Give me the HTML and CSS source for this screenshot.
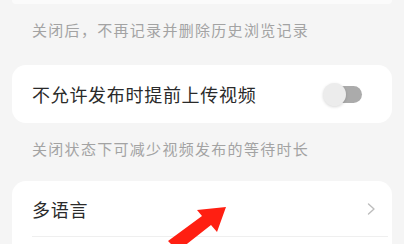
FILE: index.html
```html
<!DOCTYPE html>
<html lang="zh-CN">
<head>
<meta charset="utf-8">
<link rel="stylesheet" href="styles.css">
</head>
<body>
<div class="page">
  <div class="card card-top"></div>
  <p class="caption caption-first">关闭后，不再记录并删除历史浏览记录</p>
  <div class="card">
    <div class="row">
      <span class="label">不允许发布时提前上传视频</span>
      <span class="switch"><span class="knob"></span></span>
    </div>
  </div>
  <p class="caption">关闭状态下可减少视频发布的等待时长</p>
  <div class="card">
    <div class="row row-link">
      <span class="label">多语言</span>
      <svg class="chevron" width="9" height="12" viewBox="0 0 9 12"><path d="M1.5 1 L7 6 L1.5 11" fill="none" stroke="#bdbdbd" stroke-width="1.4" stroke-linecap="round" stroke-linejoin="round"/></svg>
    </div>
    <div class="divider"></div>
    <div class="row"></div>
  </div>
  <svg class="arrow" width="70" height="50" viewBox="0 0 70 50"><polygon points="62,12 53,37 47,30 14,56 4,46 38,21 33,15" fill="#ff1f12"/></svg>
</div>
</body>
</html>
```
FILE: styles.css
```css
html, body {
  margin: 0;
  padding: 0;
  background: #f5f5f5;
}
.page {
  position: relative;
  width: 404px;
  height: 244px;
  overflow: hidden;
  font-family: "Noto Sans CJK SC", "Noto Sans", sans-serif;
}
.card {
  margin: 0 12px;
  background: #ffffff;
  border-radius: 14px;
}
.card-top {
  height: 4px;
  border-radius: 0 0 14px 14px;
  background: #fbfbfb;
}
.caption {
  margin: 0;
  padding: 16px 0 0 32px;
  height: 42px;
  font-size: 15px;
  line-height: 20px;
  letter-spacing: 1.3px;
  color: #a3a3a3;
}
.caption-first {
  height: 45px;
}
.row {
  height: 58px;
  display: flex;
  align-items: center;
  justify-content: space-between;
  padding: 0 28px 0 20px;
}
.row-link {
  height: 55px;
  padding-right: 16px;
}
.label {
  font-size: 18px;
  letter-spacing: 0.7px;
  color: #2a2a2a;
}
.switch {
  position: relative;
  width: 36px;
  height: 17px;
  border-radius: 9px;
  background: #ababab;
  margin-right: 2px;
}
.knob {
  position: absolute;
  left: -3px;
  top: -3px;
  width: 23px;
  height: 23px;
  border-radius: 50%;
  background: #ececec;
  box-shadow: 0 1px 3px rgba(0,0,0,0.15);
}
.chevron {
  display: block;
}
.divider {
  height: 1px;
  margin: 0 4px 0 20px;
  background: #efefef;
}
.arrow {
  position: absolute;
  left: 164px;
  top: 195px;
}
```
